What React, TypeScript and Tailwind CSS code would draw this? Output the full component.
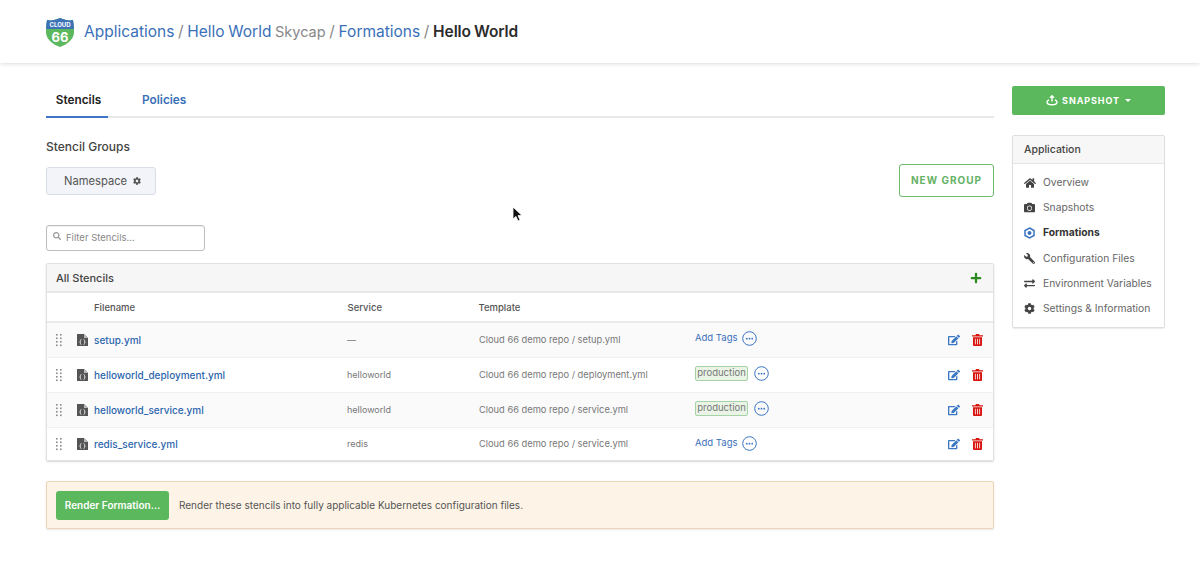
import { FaCamera, FaCog, FaEdit, FaExchangeAlt, FaHome, FaPlus, FaSearch, FaWrench } from 'react-icons/fa'

const stencils = [
  { name: 'setup.yml', service: '—', template: 'Cloud 66 demo repo / setup.yml', tagged: false, h: 'h-[35px]', bg: 'bg-[#fafafb]', tagTop: '-mt-[4px]' },
  { name: 'helloworld_deployment.yml', service: 'helloworld', template: 'Cloud 66 demo repo / deployment.yml', tagged: true, h: 'h-[35px]', bg: 'bg-white', tagTop: '-mt-[4px]' },
  { name: 'helloworld_service.yml', service: 'helloworld', template: 'Cloud 66 demo repo / service.yml', tagged: true, h: 'h-[35px]', bg: 'bg-[#fafafb]', tagTop: '-mt-[4px]' },
  { name: 'redis_service.yml', service: 'redis', template: 'Cloud 66 demo repo / service.yml', tagged: false, h: 'h-[32px]', bg: 'bg-white', tagTop: '-mt-[1px]' },
]

const navItems = [
  { label: 'Overview', icon: <FaHome size={12} /> },
  { label: 'Snapshots', icon: <FaCamera size={11} /> },
  { label: 'Formations', icon: <HexIcon />, active: true },
  { label: 'Configuration Files', icon: <FaWrench size={11} className="-scale-x-100" /> },
  { label: 'Environment Variables', icon: <FaExchangeAlt size={11} /> },
  { label: 'Settings & Information', icon: <FaCog size={11} /> },
]

function HexIcon() {
  return (
    <svg width="11" height="12" viewBox="0 0 11 12">
      <path d="M5.500 1 10 3.500v5L5.500 11 1 8.500v-5z" fill="none" stroke="#3b74c4" strokeWidth="1.5" />
      <circle cx="5.500" cy="6" r="2" fill="#3b74c4" />
    </svg>
  )
}

function Logo() {
  return (
    <svg width="28" height="29" viewBox="0 0 28 29" className="mt-[2px] shrink-0">
      <path d="M1 2c4 1 8 0 13-2 5 2 9 3 13 2 1 5 1 9 1 12 0 7-6 12-14 15C6 26 0 21 0 14 0 11 0 7 1 2z" fill="#5cb85c" />
      <path d="M1 2c4 1 8 0 13-2 5 2 9 3 13 2 .6 3 .9 6 1 9H0c.1-3 .4-6 1-9z" fill="#3d72b8" />
      <text x="14" y="9" textAnchor="middle" fontSize="6" fontWeight="700" fill="#fff" fontFamily="Inter, sans-serif">CLOUD</text>
      <text x="14" y="24" textAnchor="middle" fontSize="13" fontWeight="700" fill="#fff" fontFamily="Inter, sans-serif">66</text>
    </svg>
  )
}

function MoreCircle() {
  return (
    <svg width="15" height="15" viewBox="0 0 15 15">
      <circle cx="7.500" cy="7.500" r="6.800" fill="none" stroke="#3b74c4" strokeWidth="1" />
      <circle cx="4.800" cy="7.700" r="0.900" fill="#3b74c4" />
      <circle cx="7.500" cy="7.700" r="0.900" fill="#3b74c4" />
      <circle cx="10.200" cy="7.700" r="0.900" fill="#3b74c4" />
    </svg>
  )
}

function DragHandle() {
  return (
    <svg width="6" height="13" viewBox="0 0 6 13" fill="#8a8a8a">
      {[0, 3.5, 7, 10.5].map((y) => (
        <g key={y}>
          <rect x="0" y={y} width="1.600" height="1.600" />
          <rect x="4" y={y} width="1.600" height="1.600" />
        </g>
      ))}
    </svg>
  )
}

function FileIcon() {
  return (
    <svg width="11" height="12" viewBox="0 0 11 12" className="shrink-0">
      <path d="M0 0h7l4 4v8H0z" fill="#555" />
      <path d="M7 0v4h4z" fill="#bbb" />
      <path d="M4.300 5.500c-1 0-.8 1-.8 1.500s-.2.900-.8 1c.6.100.8.500.8 1s-.2 1.500.8 1.500M6.700 5.500c1 0 .8 1 .8 1.500s.2.900.8 1c-.6.100-.8.500-.8 1s.2 1.500-.8 1.500" fill="none" stroke="#fff" strokeWidth="0.8" />
    </svg>
  )
}

function TrashIcon() {
  return (
    <svg width="11" height="12" viewBox="0 0 11 12" className="ml-[12px] shrink-0">
      <path d="M4 0h3l.6 1.200H11v1.300H0V1.200h3.400z" fill="#d9140e" />
      <path d="M1 3.300h9V11a1 1 0 0 1-1 1H2a1 1 0 0 1-1-1z" fill="#d9140e" />
      <path d="M3.400 4.800v5.600M5.500 4.800v5.600M7.600 4.800v5.600" stroke="#fff" strokeWidth="0.8" />
    </svg>
  )
}

function SnapshotIcon() {
  return (
    <svg width="12" height="11" viewBox="0 0 12 11" fill="none" stroke="#fff" strokeWidth="1.400">
      <path d="M6 6.500V1M4 2.800 6 .8l2 2" />
      <path d="M3 4.800C1.500 5.500 1 6.300 1 7c0 1.500 2 2.800 5 2.800s5-1.300 5-2.800c0-.7-.5-1.500-2-2.200" />
    </svg>
  )
}

function Cursor() {
  return (
    <svg width="11" height="16" viewBox="0 0 11 16" className="absolute left-[512px] top-[206px]">
      <path d="M1 1v12l3-2.600L6 15l2-1-2-4.400h4z" fill="#111" stroke="#fff" strokeWidth="0.800" />
    </svg>
  )
}

export default function App() {
  return (
    <div className="relative h-[565px] w-[1200px] overflow-hidden bg-white font-['Inter',sans-serif] text-[#333]">
      <header className="flex h-[63px] items-center gap-[10px] pl-[46px] shadow-[0_1px_4px_rgba(0,0,0,0.14)]">
        <Logo />
        <div className="whitespace-nowrap text-[15.500px] text-[#888] [word-spacing:-0.7px]">
          <span className="text-[#3a70b8]">Applications</span> / <span className="text-[#3a70b8]">Hello World</span> <span className="text-[14.500px]">Skycap</span> / <span className="text-[#3a70b8]">Formations</span> / <span className="font-semibold tracking-[-0.1px] text-[#2b2b2b]">Hello World</span>
        </div>
      </header>

      <div className="flex gap-[18px] pl-[46px] pt-[22px]">
        <main className="w-[948px]">
          <nav className="flex h-[33px] border-b-2 border-[#e8e8e8] text-[11.800px] font-semibold">
            <div className="-mb-[2px] flex h-[33px] w-[62px] items-center justify-center border-b-2 border-[#3f74c6] pl-[3px] text-[#222]">Stencils</div>
            <div className="ml-[34px] flex items-center text-[#3a70b8]">Policies</div>
          </nav>

          <h2 className="mt-[21px] text-[12px] font-medium leading-[16px] text-[#444]">Stencil Groups</h2>

          <div className="mt-[12px] flex items-start justify-between">
            <div className="flex h-[28px] w-[110px] items-center gap-[6px] rounded-[3px] border border-[#d9dde6] bg-[#f2f4f9] pl-[17px] text-[11.200px] text-[#555]">
              Namespace <FaCog size={8} />
            </div>
            <div className="-mt-[3px] flex h-[33px] w-[95px] items-center justify-center rounded-[3px] border border-[#6cbb6c] text-[10px] font-bold tracking-[1px] text-[#66b266]">NEW GROUP</div>
          </div>

          <div className="mt-[28px] flex h-[26px] w-[159px] items-center gap-[5px] rounded-[3px] border border-[#bdbdbd] pl-[6px] text-[9.500px] text-[#888] shadow-[inset_0_1px_1px_rgba(0,0,0,0.06)]">
            <FaSearch size={8} className="-mt-[4px] text-[#999]" /> Filter Stencils…
          </div>

          <section className="mt-[12px] rounded-[2px] border border-[#e2e2e2] shadow-[0_1px_2px_rgba(0,0,0,0.16)]">
            <div className="flex h-[29px] items-center justify-between border-b-2 border-[#e8e8e8] bg-[#f6f6f6] pl-[9px] pr-[11px] pt-[1px]">
              <span className="text-[11px] font-medium text-[#444]">All Stencils</span>
              <FaPlus size={12} className="text-[#2d8a22]" />
            </div>
            <div className="flex h-[30px] items-center border-b-2 border-[#eaeaea] pl-[47px] pt-[3px] text-[9.500px] font-medium text-[#555]">
              <span className="w-[253.500px]">Filename</span>
              <span className="w-[131px]">Service</span>
              <span>Template</span>
            </div>
            {stencils.map((s) => (
              <div key={s.name} className={`flex items-center border-b border-[#f0f0f0] last:border-b-0 ${s.h} ${s.bg}`}>
                <div className="ml-[9px] w-[21px]"><DragHandle /></div>
                <FileIcon />
                <span className="ml-[6px] w-[253px] text-[10px] font-medium text-[#2d66ad]">{s.name}</span>
                <span className="w-[132px] text-[9px] text-[#777]">{s.service}</span>
                <span className="w-[216px] text-[9.300px] text-[#777]">{s.template}</span>
                <div className={`flex w-[253px] items-center ${s.tagTop}`}>
                  {s.tagged ? (
                    <>
                      <span className="flex h-[15px] w-[53px] items-center justify-center rounded-[2px] border border-[#a5d3a5] bg-[#e9f4e6] text-[9.500px] text-[#777]">production</span>
                      <span className="ml-[6px] flex"><MoreCircle /></span>
                    </>
                  ) : (
                    <>
                      <span className="text-[9.500px] text-[#3a70b8]">Add Tags</span>
                      <span className="ml-[5px] flex"><MoreCircle /></span>
                    </>
                  )}
                </div>
                <FaEdit size={12} className="text-[#3a78c4]" />
                <TrashIcon />
              </div>
            ))}
          </section>

          <div className="mt-[20px] flex h-[48px] items-center gap-[10px] rounded-[2px] border border-[#eed5b5] bg-[#fdf3e6] pl-[9px] shadow-[0_1px_2px_rgba(0,0,0,0.1)]">
            <div className="flex h-[29px] w-[113px] items-center justify-center rounded-[3px] bg-[#5cb85c] text-[10px] font-semibold text-white">Render Formation…</div>
            <span className="text-[10px] text-[#555]">Render these stencils into fully applicable Kubernetes configuration files.</span>
          </div>
        </main>

        <aside className="w-[153px]">
          <div className="mt-[1px] flex h-[29px] items-center justify-center gap-[4px] rounded-[2px] bg-[#5cb85c] text-[9px] font-bold tracking-[0.9px] text-white">
            <SnapshotIcon /> SNAPSHOT <span className="ml-[1px] h-0 w-0 border-x-[3px] border-t-[3px] border-x-transparent border-t-white" />
          </div>
          <div className="mt-[20px] rounded-[2px] border border-[#dedede] shadow-[0_1px_1px_rgba(0,0,0,0.08)]">
            <div className="flex h-[28px] items-center border-b border-[#e5e5e5] bg-[#f7f7f7] pl-[11px] pt-[1px] text-[10.500px] font-medium text-[#444]">Application</div>
            <ul className="flex flex-col gap-[5.300px] pb-[8px] pl-[11px] pt-[8.500px]">
              {navItems.map((n) => (
                <li key={n.label} className={`flex h-[20px] items-center whitespace-nowrap text-[10.300px] ${n.active ? 'font-bold text-[#333]' : 'text-[#666]'}`}>
                  <span className="flex w-[19px] text-[#444]">{n.icon}</span>
                  {n.label}
                </li>
              ))}
            </ul>
          </div>
        </aside>
      </div>

      <Cursor />
    </div>
  )
}
